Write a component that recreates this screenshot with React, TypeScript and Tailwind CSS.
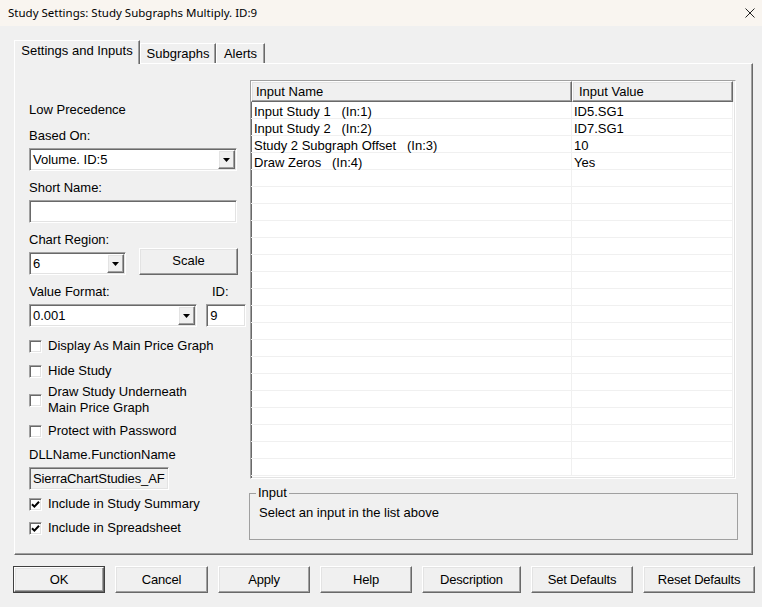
import React from "react";

// classic win32 3d borders
const sunken =
  "border border-t-[#a0a0a0] border-l-[#a0a0a0] border-r-white border-b-white shadow-[inset_1px_1px_0_#696969,inset_-1px_-1px_0_#e3e3e3]";
const raised =
  "border border-t-white border-l-white border-r-[#696969] border-b-[#696969] shadow-[inset_-1px_-1px_0_#a0a0a0,inset_1px_1px_0_#e3e3e3]";

const inputs: [string, string][] = [
  ["Input Study 1   (In:1)", "ID5.SG1"],
  ["Input Study 2   (In:2)", "ID7.SG1"],
  ["Study 2 Subgraph Offset   (In:3)", "10"],
  ["Draw Zeros   (In:4)", "Yes"],
];

function Arrow() {
  return (
    <svg width="7" height="4" viewBox="0 0 7 4">
      <polygon points="0,0 7,0 3.5,4" fill="#000" />
    </svg>
  );
}

function Combo({ value, w }: { value: string; w: string }) {
  return (
    <div className={`${sunken} ${w} h-[23px] bg-white flex items-center pl-[3px] pr-[1px]`}>
      <span className="flex-1 whitespace-nowrap">{value}</span>
      <div className={`${raised} w-[17px] h-[19px] bg-[#f0f0f0] flex items-center justify-center`}>
        <Arrow />
      </div>
    </div>
  );
}

function Check({ label, checked, twoLine }: { label: React.ReactNode; checked?: boolean; twoLine?: boolean }) {
  return (
    <div className={`flex items-center ${twoLine ? "h-[32px]" : "h-[16px]"}`}>
      <div className={`${sunken} w-[13px] h-[13px] shrink-0 bg-white mr-[6px] flex items-center justify-center`}>
        {checked && (
          <svg width="9" height="9" viewBox="0 0 9 9">
            <path d="M1 4.2 L3.4 6.6 L8 1.8" stroke="#000" strokeWidth="2" fill="none" />
          </svg>
        )}
      </div>
      <span className="leading-[16px]">{label}</span>
    </div>
  );
}

function Tab({ label, w, selected }: { label: string; w: string; selected?: boolean }) {
  return (
    <div
      className={`${w} flex items-center justify-center border-t border-l border-t-white border-l-white border-r border-r-[#696969] shadow-[inset_-1px_0_0_#a0a0a0] bg-[#f0f0f0] ${
        selected ? "h-[24px] -mb-[1px] pb-[4px] relative z-10" : "h-[20px]"
      }`}
    >
      {label}
    </div>
  );
}

function Button({ label, w, def }: { label: string; w: string; def?: boolean }) {
  return (
    <div className={`${w} h-[27px] ${def ? "border border-[#404040]" : ""}`}>
      <div className={`${raised} h-full bg-[#f0f0f0] flex items-center justify-center tracking-[-0.2px]`}>{label}</div>
    </div>
  );
}

export default function App() {
  return (
    <div className="w-[762px] h-[607px] bg-[#f0f0f0] text-black text-[13px] font-['Liberation_Sans',Arial,sans-serif] overflow-hidden">
      {/* title bar */}
      <div className="h-[26px] bg-[#f9f5f0] flex items-center justify-between pl-[8px] pr-[7px] font-['Noto_Sans',sans-serif] text-[11.5px]">
        <span>Study Settings: Study Subgraphs Multiply. ID:9</span>
        <svg width="10" height="10" viewBox="0 0 10 10">
          <path d="M0.5 0.5 L9.5 9.5 M9.5 0.5 L0.5 9.5" stroke="#222" strokeWidth="1" />
        </svg>
      </div>

      <div className="pl-[14px] pt-[15px]">
        {/* tabs */}
        <div className="flex items-end h-[22px]">
          <Tab label="Settings and Inputs" w="w-[126px]" selected />
          <Tab label="Subgraphs" w="w-[76px]" />
          <Tab label="Alerts" w="w-[49px]" />
        </div>

        {/* tab panel */}
        <div className="w-[739px] h-[492px] border border-t-white border-l-white border-r-[#696969] border-b-[#696969] shadow-[inset_-1px_-1px_0_#a0a0a0] flex items-start pl-[14px] pt-[16px]">
          {/* left column */}
          <div className="w-[217px] mt-[22px] flex flex-col">
            <div className="h-[16px] leading-[16px]">Low Precedence</div>
            <div className="h-[16px] leading-[16px] mt-[10px]">Based On:</div>
            <div className="mt-[4px]">
              <Combo value="Volume. ID:5" w="w-[208px]" />
            </div>
            <div className="h-[16px] leading-[16px] mt-[9px]">Short Name:</div>
            <div className={`${sunken} w-[208px] h-[23px] bg-white mt-[4px]`} />
            <div className="h-[16px] leading-[16px] mt-[9px]">Chart Region:</div>
            <div className="flex items-end h-[27px]">
              <Combo value="6" w="w-[97px]" />
              <div className={`${raised} w-[99px] h-[27px] ml-[13px] bg-[#f0f0f0] flex items-center justify-center pb-[1px]`}>
                Scale
              </div>
            </div>
            <div className="h-[16px] leading-[16px] mt-[9px] flex">
              <span className="w-[183px]">Value Format:</span>
              <span>ID:</span>
            </div>
            <div className="flex mt-[4px]">
              <Combo value="0.001" w="w-[169px]" />
              <div className={`${sunken} w-[40px] h-[23px] ml-[9px] bg-white flex items-center pl-[3px]`}>9</div>
            </div>
            <div className="mt-[11px]">
              <Check label="Display As Main Price Graph" />
            </div>
            <div className="mt-[9px]">
              <Check label="Hide Study" />
            </div>
            <div className="mt-[5px]">
              <Check
                twoLine
                label={
                  <>
                    Draw Study Underneath
                    <br />
                    Main Price Graph
                  </>
                }
              />
            </div>
            <div className="mt-[7px]">
              <Check label="Protect with Password" />
            </div>
            <div className="h-[16px] leading-[16px] mt-[8px]">DLLName.FunctionName</div>
            <div className={`${sunken} w-[140px] h-[23px] mt-[4px] bg-[#f0f0f0] flex items-center pl-[3px] whitespace-nowrap tracking-[-0.1px]`}>
              SierraChartStudies_AF
            </div>
            <div className="mt-[6px]">
              <Check label="Include in Study Summary" checked />
            </div>
            <div className="mt-[8px]">
              <Check label="Include in Spreadsheet" checked />
            </div>
          </div>

          {/* right column */}
          <div className="w-[489px] ml-[3px] flex flex-col">
            <div className={`${sunken} ml-[1px] w-[486px] h-[399px] bg-white flex flex-col overflow-hidden`}>
              <div className="flex h-[21px] shrink-0 bg-[#f0f0f0]">
                <div className={`${raised} w-[321px] flex items-center pl-[4px]`}>Input Name</div>
                <div className={`${raised} w-[161px] flex items-center pl-[6px]`}>Input Value</div>
              </div>
              {Array.from({ length: 22 }).map((_, i) => {
                const r = inputs[i];
                return (
                  <div key={i} className="flex h-[17px] shrink-0">
                    <div className="w-[321px] border-r border-b border-[#f0f0f0] pl-[3px] pt-[2px] leading-[15px] whitespace-pre">
                      {r ? r[0] : ""}
                    </div>
                    <div className="w-[161px] border-b border-r border-[#f0f0f0] pl-[2px] pt-[2px] leading-[15px]">
                      {r ? r[1] : ""}
                    </div>
                  </div>
                );
              })}
            </div>

            <fieldset className="mt-[6px] h-[55px] border border-[#a0a0a0] pl-[6px] pr-[6px]">
              <legend className="px-[2px] leading-[16px]">Input</legend>
              <div className="ml-[3px] mt-[4px] leading-[16px]">Select an input in the list above</div>
            </fieldset>
          </div>
        </div>

        {/* bottom buttons */}
        <div className="flex gap-[10px] mt-[11px] -ml-[1px]">
          <Button label="OK" w="w-[92px]" def />
          <Button label="Cancel" w="w-[93px]" />
          <Button label="Apply" w="w-[92px]" />
          <Button label="Help" w="w-[92px]" />
          <Button label="Description" w="w-[99px]" />
          <Button label="Set Defaults" w="w-[102px]" />
          <Button label="Reset Defaults" w="w-[112px]" />
        </div>
      </div>
    </div>
  );
}
